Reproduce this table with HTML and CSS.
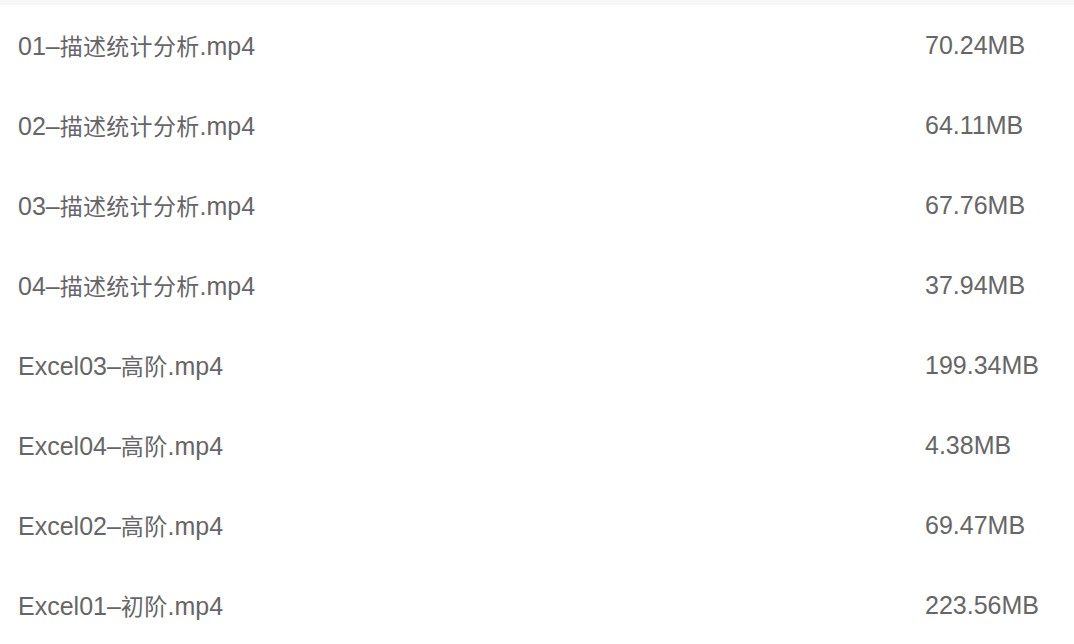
FILE: index.html
```html
<!DOCTYPE html>
<html lang="zh-CN">
<head>
<meta charset="utf-8">
<title>文件列表</title>
<link rel="stylesheet" href="styles.css">
</head>
<body>
<div class="topbar"></div>
<ul class="files">
  <li class="row"><span class="name">01–<span class="cjk">描述统计分析</span>.mp4</span><span class="size">70.24MB</span></li>
  <li class="row"><span class="name">02–<span class="cjk">描述统计分析</span>.mp4</span><span class="size">64.11MB</span></li>
  <li class="row"><span class="name">03–<span class="cjk">描述统计分析</span>.mp4</span><span class="size">67.76MB</span></li>
  <li class="row"><span class="name">04–<span class="cjk">描述统计分析</span>.mp4</span><span class="size">37.94MB</span></li>
  <li class="row"><span class="name">Excel03–<span class="cjk">高阶</span>.mp4</span><span class="size">199.34MB</span></li>
  <li class="row"><span class="name">Excel04–<span class="cjk">高阶</span>.mp4</span><span class="size">4.38MB</span></li>
  <li class="row"><span class="name">Excel02–<span class="cjk">高阶</span>.mp4</span><span class="size">69.47MB</span></li>
  <li class="row"><span class="name">Excel01–<span class="cjk">初阶</span>.mp4</span><span class="size">223.56MB</span></li>
</ul>
</body>
</html>
```
FILE: styles.css
```css
html, body {
  margin: 0;
  padding: 0;
  background: #ffffff;
}
body {
  font-family: "Liberation Sans", "Noto Sans CJK SC", sans-serif;
  color: #666666;
  width: 1074px;
  height: 644px;
  overflow: hidden;
}
.topbar {
  height: 5px;
  background: #f6f6f6;
}
.files {
  list-style: none;
  margin: 0;
  padding: 0;
}
.row {
  display: grid;
  grid-template-columns: 907px 1fr;
  align-items: center;
  height: 80px;
  padding-left: 18px;
  font-size: 25px;
  line-height: 30px;
}
.name, .size {
  white-space: nowrap;
}
.cjk {
  font-family: "Noto Sans CJK SC", sans-serif;
  font-size: 23px;
  letter-spacing: 0.3px;
}
```
